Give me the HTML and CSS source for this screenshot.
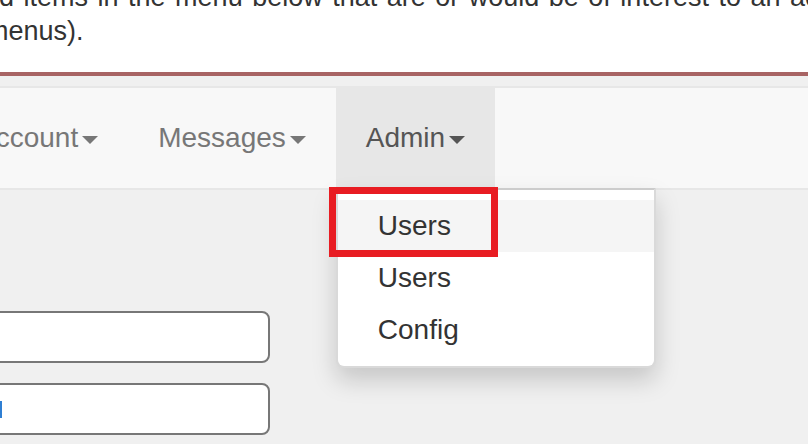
FILE: index.html
```html
<!DOCTYPE html>
<html>
<head>
<meta charset="utf-8">
<link rel="stylesheet" href="styles.css">
</head>
<body>
<div class="intro">
  <div class="line line-1">Add items in the menu below that are or would be of interest to an admin (including sub</div>
  <div class="line line-2">menus).</div>
</div>
<nav class="navbar">
  <ul class="nav">
    <li class="nav-item"><a class="nav-link">Account<span class="caret"></span></a></li>
    <li class="nav-item"><a class="nav-link">Messages<span class="caret"></span></a></li>
    <li class="nav-item open">
      <a class="nav-link">Admin<span class="caret"></span></a>
      <ul class="dropdown">
        <li><a class="dropdown-link active">Users</a></li>
        <li><a class="dropdown-link">Users</a></li>
        <li><a class="dropdown-link">Config</a></li>
      </ul>
      <div class="highlight"></div>
    </li>
  </ul>
</nav>
<div class="form">
  <div class="field"></div>
  <div class="field field-focus"><span class="cursor"></span></div>
</div>
</body>
</html>
```
FILE: styles.css
```css
html, body {
  margin: 0;
  padding: 0;
}
body {
  background: #f0f0f0;
  font-family: "Liberation Sans", Arial, sans-serif;
  overflow: hidden;
  width: 808px;
  height: 444px;
}
.intro {
  background: #fff;
  height: 72px;
  border-bottom: 4px solid #a86464;
  overflow: hidden;
  color: #333;
}
.line {
  font-family: "Liberation Sans Narrow", "Arial Narrow", "Liberation Sans", sans-serif;
  font-stretch: condensed;
  font-size: 27px;
  line-height: 34px;
  white-space: nowrap;
}
.line-1 {
  margin: -20px 0 0 -34px;
  word-spacing: 2px;
}
.line-2 {
  margin-left: -14px;
}
.navbar {
  margin-top: 10px;
  background: #f8f8f8;
  border-top: 2px solid #e7e7e7;
  border-bottom: 2px solid #e7e7e7;
  height: 100px;
}
.nav {
  display: flex;
  list-style: none;
  margin: 0 0 0 -53px;
  padding: 0;
}
.nav-item {
  position: relative;
}
.nav-link {
  display: block;
  padding: 30px;
  font-size: 28px;
  line-height: 40px;
  color: #777;
  white-space: nowrap;
}
.caret {
  display: inline-block;
  width: 0;
  height: 0;
  margin-left: 4px;
  vertical-align: middle;
  border-top: 8px solid;
  border-left: 8px solid transparent;
  border-right: 8px solid transparent;
}
.open .nav-link {
  background: #e7e7e7;
  color: #555;
}
.dropdown {
  position: absolute;
  top: 100%;
  left: 0;
  min-width: 320px;
  box-sizing: border-box;
  margin: 0;
  padding: 10px 0;
  list-style: none;
  background: #fff;
  border: 2px solid rgba(0, 0, 0, 0.15);
  border-top-color: rgba(0, 0, 0, 0.2);
  border-radius: 0 0 8px 8px;
  box-shadow: 0 12px 24px rgba(0, 0, 0, 0.175);
}
.dropdown-link {
  display: block;
  padding: 6px 40px;
  font-size: 28px;
  line-height: 40px;
  color: #333;
  white-space: nowrap;
}
.dropdown-link.active {
  background: #f5f5f5;
}
.highlight {
  position: absolute;
  left: -7px;
  top: 99px;
  width: 169px;
  height: 70px;
  box-sizing: border-box;
  border: 7px solid #e81c22;
}
.form {
  padding-top: 121px;
  margin-left: -40px;
}
.field {
  width: 310px;
  height: 52px;
  box-sizing: border-box;
  background: #fff;
  border: 2px solid #777;
  border-radius: 8px;
}
.field + .field {
  margin-top: 20px;
}
.field-focus {
  display: flex;
  align-items: center;
  padding-left: 38px;
}
.cursor {
  display: block;
  width: 2px;
  height: 17px;
  background: #2f7fd3;
}
```
